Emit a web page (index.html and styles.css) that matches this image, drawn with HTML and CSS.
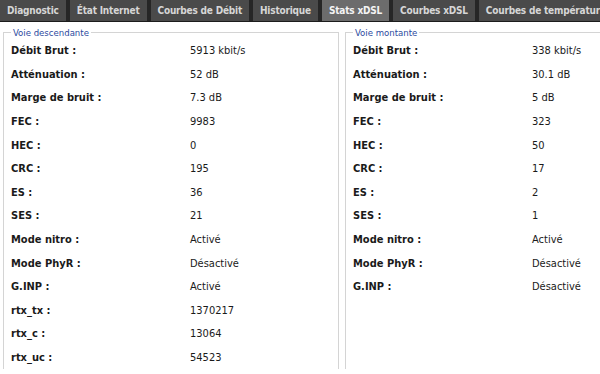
FILE: index.html
```html
<!DOCTYPE html>
<html lang="fr">
<head>
    <meta charset="UTF-8">
    <title>Stats xDSL</title>
    <link rel="stylesheet" href="styles.css">
</head>
<body>
    <div class="tabs">
        <span class="tab">Diagnostic</span>
        <span class="tab">État Internet</span>
        <span class="tab">Courbes de Débit</span>
        <span class="tab">Historique</span>
        <span class="tab active">Stats xDSL</span>
        <span class="tab">Courbes xDSL</span>
        <span class="tab">Courbes de température</span>
    </div>
    <div class="panels">
        <fieldset class="panel">
            <legend>Voie descendante</legend>
            <div class="row"><span class="label">Débit Brut :</span><span>5913 kbit/s</span></div>
            <div class="row"><span class="label">Atténuation :</span><span>52 dB</span></div>
            <div class="row"><span class="label">Marge de bruit :</span><span>7.3 dB</span></div>
            <div class="row"><span class="label">FEC :</span><span>9983</span></div>
            <div class="row"><span class="label">HEC :</span><span>0</span></div>
            <div class="row"><span class="label">CRC :</span><span>195</span></div>
            <div class="row"><span class="label">ES :</span><span>36</span></div>
            <div class="row"><span class="label">SES :</span><span>21</span></div>
            <div class="row"><span class="label">Mode nitro :</span><span>Activé</span></div>
            <div class="row"><span class="label">Mode PhyR :</span><span>Désactivé</span></div>
            <div class="row"><span class="label">G.INP :</span><span>Activé</span></div>
            <div class="row"><span class="label">rtx_tx :</span><span>1370217</span></div>
            <div class="row"><span class="label">rtx_c :</span><span>13064</span></div>
            <div class="row"><span class="label">rtx_uc :</span><span>54523</span></div>
        </fieldset>
        <fieldset class="panel">
            <legend>Voie montante</legend>
            <div class="row"><span class="label">Débit Brut :</span><span>338 kbit/s</span></div>
            <div class="row"><span class="label">Atténuation :</span><span>30.1 dB</span></div>
            <div class="row"><span class="label">Marge de bruit :</span><span>5 dB</span></div>
            <div class="row"><span class="label">FEC :</span><span>323</span></div>
            <div class="row"><span class="label">HEC :</span><span>50</span></div>
            <div class="row"><span class="label">CRC :</span><span>17</span></div>
            <div class="row"><span class="label">ES :</span><span>2</span></div>
            <div class="row"><span class="label">SES :</span><span>1</span></div>
            <div class="row"><span class="label">Mode nitro :</span><span>Activé</span></div>
            <div class="row"><span class="label">Mode PhyR :</span><span>Désactivé</span></div>
            <div class="row"><span class="label">G.INP :</span><span>Désactivé</span></div>
        </fieldset>
    </div>
</body>
</html>
```

FILE: styles.css
```css
body {
    margin: 0;
    overflow: hidden;
    background-color: #fff;
    font-family: "DejaVu Sans Condensed", "DejaVu Sans", sans-serif;
    font-size: 11px;
    color: #1a1a1a;
}
.tabs {
    display: flex;
    gap: 4px;
    height: 21px;
    background-color: #262626;
    border-bottom: 1px solid #1c1c1c;
    white-space: nowrap;
}
.tab {
    display: flex;
    align-items: center;
    padding: 0 7px;
    background-color: #4a4a4a;
    color: #d6d6d6;
    font-weight: bold;
    font-size: 10px;
    letter-spacing: -0.2px;
    flex-shrink: 0;
}
.tab.active {
    background-color: #6c6c6c;
    color: #f4f4f4;
}
.panels {
    display: flex;
    gap: 6px;
    width: 700px;
    padding: 5px 0 0 3px;
}
.panel {
    width: 320px;
    margin: 0;
    padding: 1px 7px 0;
    border: 1px solid #d4d4d4;
    border-bottom: none;
    min-height: 336px;
}
legend {
    color: #2c4aa0;
    padding: 0 2px;
    margin-left: 0;
    font-size: 9.5px;
}
.row {
    display: flex;
    height: 23.6px;
    align-items: center;
}
.label {
    width: 179px;
    font-weight: bold;
    font-size: 11px;
}
```
